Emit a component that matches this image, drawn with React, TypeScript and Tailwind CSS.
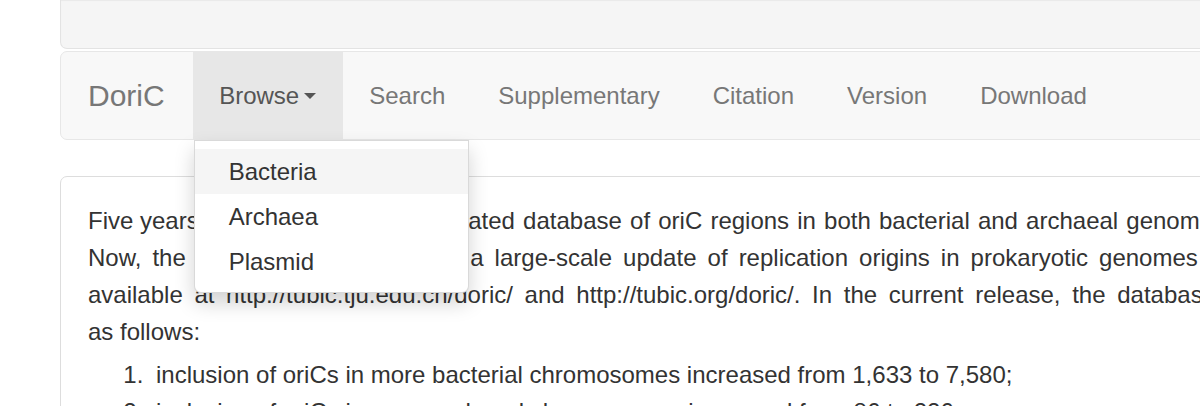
const navLinks = ["Search", "Supplementary", "Citation", "Version", "Download"];
const browseItems = ["Bacteria", "Archaea", "Plasmid"];

export default function App() {
  return (
    <div className="w-[1200px] h-[406px] overflow-hidden bg-white text-[#333] font-['Liberation_Sans',Arial,sans-serif]">
      <div className="ml-[60px] w-[1400px]">
        {/* well above the navbar */}
        <div className="h-[49px] bg-[#f5f5f5] border border-t-0 border-[#e3e3e3] rounded-b-[7px] shadow-[inset_0_1px_1px_rgba(0,0,0,0.05)]" />

        {/* Navbar */}
        <nav className="mt-[2px] h-[89px] flex bg-[#f8f8f8] border border-[#e7e7e7] rounded-[7px]">
          <a className="flex items-center pl-[27px] pr-[28px] text-[30px] text-[#777]">DoriC</a>
          <ul className="flex">
            <li className="relative">
              <a className="h-full flex items-center px-[26.5px] bg-[#e7e7e7] text-[24px] text-[#555]">
                Browse
                <span className="inline-block ml-[5px] w-0 h-0 border-t-[6px] border-x-[6px] border-x-transparent border-t-[#555]" />
              </a>
              <ul className="absolute left-[1px] top-full mt-[1px] w-[275px] py-[8px] bg-white border border-[rgba(0,0,0,0.15)] rounded-b-[7px] shadow-[0_10px_20px_rgba(0,0,0,0.175)] z-10">
                {browseItems.map((item, i) => (
                  <li
                    key={item}
                    className={`h-[45px] flex items-center px-[34px] text-[24px] text-[#333] ${i === 0 ? "bg-[#f5f5f5]" : ""}`}
                  >
                    {item}
                  </li>
                ))}
              </ul>
            </li>
            {navLinks.map((l) => (
              <li key={l}>
                <a className="h-full flex items-center px-[26.5px] text-[24px] text-[#777]">{l}</a>
              </li>
            ))}
          </ul>
        </nav>

        {/* Content panel */}
        <div className="mt-[36px] bg-white border border-[#ddd] rounded-[7px] pt-[25px] px-[27px] h-[400px]">
          <div className="text-[24px] leading-[37px] mb-[6px]">
            <div className="whitespace-nowrap">
              Five years ago, we released an upd
              <span className="[word-spacing:1.5px]">
                ated database of oriC regions in both bacterial and archaeal genomes
              </span>
            </div>
            <div className="whitespace-nowrap [word-spacing:4.4px]">
              Now, the updated DoriC presents a large-scale update of replication origins in prokaryotic genomes including
            </div>
            <div className="whitespace-nowrap [word-spacing:5px]">
              available at http://tubic.tju.edu.cn/doric/ and http://tubic.org/doric/. In the current release, the database
            </div>
            <div>as follows:</div>
          </div>
          <ol className="list-decimal pl-[62px] text-[24px] leading-[37px]">
            <li className="pl-[6px]">inclusion of oriCs in more bacterial chromosomes increased from 1,633 to 7,580;</li>
            <li className="pl-[6px]">inclusion of oriCs in more archaeal chromosomes increased from 86 to 226;</li>
          </ol>
        </div>
      </div>
    </div>
  );
}
